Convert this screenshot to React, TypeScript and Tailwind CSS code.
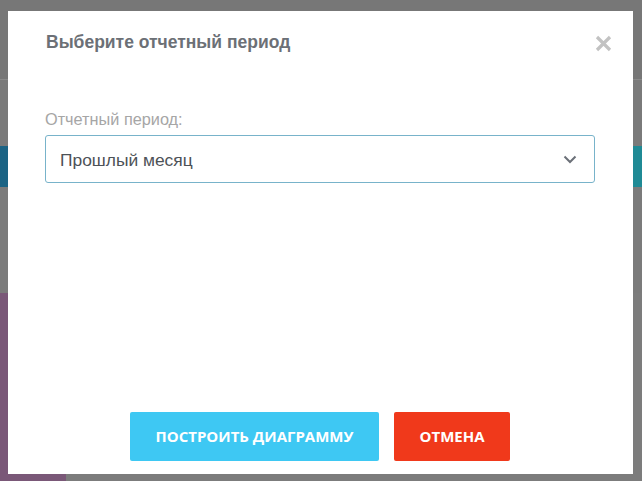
import React from "react";

export default function App() {
  return (
    <div className="relative w-[642px] h-[481px] overflow-hidden bg-[#7a7a7a]" style={{ fontFamily: '"Liberation Sans", Arial, sans-serif' }}>
      {/* dimmed page behind */}
      <div className="flex flex-col w-full h-full">
        <div className="h-[80px] bg-[#777777] border-b border-[#8a8a8a]" />
        <div className="h-[66px] bg-[#7a7a7a]" />
        <div className="h-[41px] flex">
          <div className="w-[320px] bg-[#1b6384]" />
          <div className="flex-1 bg-[#1f8a95]" />
        </div>
        <div className="h-[106px] bg-[#7b7b7b]" />
        <div className="flex-1 flex">
          <div className="w-[66px] bg-[#7a5878]" />
          <div className="flex-1 bg-[#7c7c7c]" />
        </div>
      </div>

      {/* modal */}
      <div className="absolute left-[8px] top-[11px] w-[625px] h-[463px] bg-white flex flex-col">
        <div className="flex items-start justify-between pl-[38px] pr-[21px] pt-[21px]">
          <h2 className="text-[17.5px] leading-[20px] font-bold text-[#6c7076]">Выберите отчетный период</h2>
          <svg width="17" height="17" viewBox="0 0 17 17" className="mt-[3px]">
            <path d="M2 2 L15 15 M15 2 L2 15" stroke="#c2c2c2" strokeWidth="3.2" strokeLinecap="butt" />
          </svg>
        </div>
        <div className="pl-[37px] pr-[38px] pt-[58px]">
          <div className="text-[16.3px] leading-[18px] text-[#a6a6a6] mb-[7px]">Отчетный период:</div>
          <div className="h-[48px] border border-[#78b3ca] rounded-[3px] flex items-center justify-between pl-[14px] pr-[17px]">
            <span className="text-[17.4px] text-[#4d5257] mt-[2px]">Прошлый месяц</span>
            <svg width="14" height="9" viewBox="0 0 14 9">
              <path d="M1.5 1.5 L7 7 L12.5 1.5" fill="none" stroke="#6b7078" strokeWidth="2" />
            </svg>
          </div>
        </div>
        <div className="flex-1" />
        <div className="flex justify-center gap-[15px] pb-[13px] pl-[0px] pr-[1px]">
          <button className="w-[249px] h-[49px] rounded-[2px] bg-[#3ec8f3] text-white text-[15px] font-bold tracking-[0px]" style={{ fontFamily: '"Open Sans", sans-serif' }}>ПОСТРОИТЬ ДИАГРАММУ</button>
          <button className="w-[116px] h-[49px] rounded-[2px] bg-[#f0391b] text-white text-[15px] font-bold tracking-[0px]" style={{ fontFamily: '"Open Sans", sans-serif' }}>ОТМЕНА</button>
        </div>
      </div>
    </div>
  );
}
